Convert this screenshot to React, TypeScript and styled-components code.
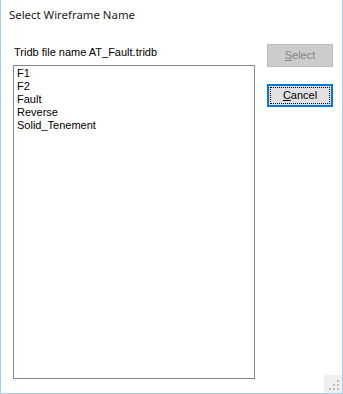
import React from "react";
import styled, { createGlobalStyle } from "styled-components";

const Global = createGlobalStyle`
  html, body { margin: 0; padding: 0; background: #ffffff; }
  * { box-sizing: border-box; }
`;

const Window = styled.div`
  position: relative;
  width: 343px;
  height: 394px;
  background: #ffffff;
  border-left: 1px solid #a9cdeb;
  border-right: 1px solid #a9cdeb;
  border-bottom: 1px solid #a9cdeb;
  display: flex;
  flex-direction: column;
`;

const Title = styled.div`
  height: 32px;
  padding: 7px 0 0 8px;
  font-family: "Noto Sans", "Segoe UI", sans-serif;
  font-size: 11.4px;
  line-height: 16px;
  color: #1a1a1a;
`;

const Body = styled.div`
  display: flex;
  flex-direction: row;
  align-items: flex-start;
`;

const LeftCol = styled.div`
  margin-left: 12px;
  width: 242px;
  display: flex;
  flex-direction: column;
`;

const Label = styled.div`
  margin-top: 14px;
  margin-left: 1px;
  height: 13px;
  font-family: "Liberation Sans", Arial, sans-serif;
  font-size: 11px;
  line-height: 13px;
  color: #000;
  white-space: nowrap;
`;

const ListBox = styled.div`
  margin-top: 6px;
  height: 314px;
  border: 1px solid #828790;
  background: #fff;
  padding: 1px 0 0 3px;
  display: flex;
  flex-direction: column;
`;

const Item = styled.div`
  font-family: "Liberation Sans", Arial, sans-serif;
  font-size: 11px;
  line-height: 13px;
  color: #000;
  white-space: nowrap;
`;

const RightCol = styled.div`
  margin-left: 12px;
  margin-top: 12px;
  display: flex;
  flex-direction: column;
  gap: 17px;
`;

const Button = styled.div<{ $disabled?: boolean; $focused?: boolean }>`
  position: relative;
  width: 66px;
  height: 23px;
  display: flex;
  align-items: center;
  justify-content: center;
  font-family: "Liberation Sans", Arial, sans-serif;
  font-size: 11px;
  line-height: 13px;
  background: ${(p) => (p.$disabled ? "#cccccc" : "#e1e1e1")};
  color: ${(p) => (p.$disabled ? "#838383" : "#000")};
  border: 1px solid ${(p) => (p.$disabled ? "#bfbfbf" : "#0078d7")};
  box-shadow: ${(p) => (p.$focused ? "inset 0 0 0 1px #0078d7" : "none")};
  ${(p) =>
    p.$focused
      ? `&::after {
    content: "";
    position: absolute;
    inset: 2px;
    border: 1px dotted #000;
  }`
      : ""}
  u { text-decoration: underline; text-underline-offset: 1px; }
`;

const Grip = styled.div`
  position: absolute;
  right: 0;
  bottom: 0;
  width: 18px;
  height: 18px;
  background: #f0f0f0;
  display: flex;
  align-items: flex-end;
  justify-content: flex-end;
`;

const items = ["F1", "F2", "Fault", "Reverse", "Solid_Tenement"];

export default function App() {
  return (
    <>
      <Global />
      <Window>
        <Title>Select Wireframe Name</Title>
        <Body>
          <LeftCol>
            <Label>Tridb file name AT_Fault.tridb</Label>
            <ListBox>
              {items.map((t) => (
                <Item key={t}>{t}</Item>
              ))}
            </ListBox>
          </LeftCol>
          <RightCol>
            <Button $disabled>
              <span>
                <u>S</u>elect
              </span>
            </Button>
            <Button $focused>
              <span>
                <u>C</u>ancel
              </span>
            </Button>
          </RightCol>
        </Body>
        <Grip>
          <svg width="18" height="18" viewBox="0 0 18 18">
            <g fill="#bcbcbc">
              <rect x="13" y="5" width="2" height="2" />
              <rect x="9" y="9" width="2" height="2" />
              <rect x="13" y="9" width="2" height="2" />
              <rect x="5" y="13" width="2" height="2" />
              <rect x="9" y="13" width="2" height="2" />
              <rect x="13" y="13" width="2" height="2" />
            </g>
          </svg>
        </Grip>
      </Window>
    </>
  );
}
